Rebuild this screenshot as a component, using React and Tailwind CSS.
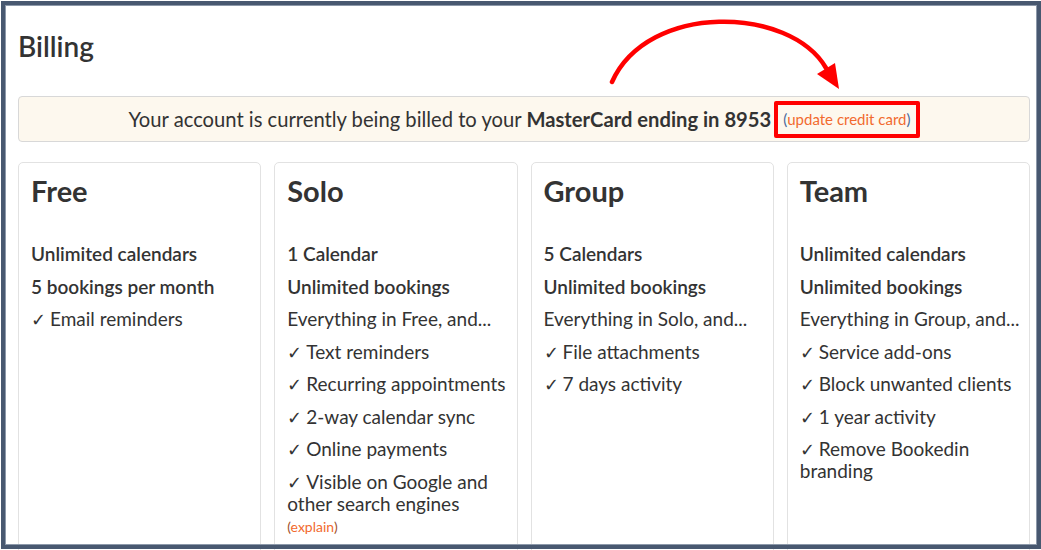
import React from "react";

const F = { fontFamily: "Lato, 'Open Sans', sans-serif" };

const plans = [
  {
    name: "Free",
    items: [
      { t: "Unlimited calendars", b: true },
      { t: "5 bookings per month", b: true },
      { t: "Email reminders", c: true },
    ],
  },
  {
    name: "Solo",
    items: [
      { t: "1 Calendar", b: true },
      { t: "Unlimited bookings", b: true },
      { t: "Everything in Free, and..." },
      { t: "Text reminders", c: true },
      { t: "Recurring appointments", c: true },
      { t: "2-way calendar sync", c: true },
      { t: "Online payments", c: true },
      { t: "Visible on Google and other search engines", c: true, explain: true },
    ],
  },
  {
    name: "Group",
    items: [
      { t: "5 Calendars", b: true },
      { t: "Unlimited bookings", b: true },
      { t: "Everything in Solo, and..." },
      { t: "File attachments", c: true },
      { t: "7 days activity", c: true },
    ],
  },
  {
    name: "Team",
    items: [
      { t: "Unlimited calendars", b: true },
      { t: "Unlimited bookings", b: true },
      { t: "Everything in Group, and..." },
      { t: "Service add-ons", c: true },
      { t: "Block unwanted clients", c: true },
      { t: "1 year activity", c: true },
      { t: "Remove Bookedin branding", c: true },
    ],
  },
];

export default function App() {
  return (
    <div className="relative w-[1041px] h-[550px] overflow-hidden bg-white text-[#333]" style={F}>
      <div className="pl-[18px] pr-[11px] pt-[30px]">
        <h1 className="text-[28px] leading-[32px] font-semibold text-[#333]">Billing</h1>
        <div className="mt-[34px] h-[46px] flex items-center justify-center rounded-[4px] border border-[#d8d8d8] bg-[#fdf8ee] text-[20.2px]">
          <span className="whitespace-nowrap">
            Your account is currently being billed to your{" "}
            <span className="font-bold">MasterCard ending in 8953</span>
          </span>
          <span className="ml-[3px] rounded-[2px] border-[4px] border-[#ff0000] px-[5px] h-[37px] flex items-center whitespace-nowrap text-[15px] text-[#f26a2e]">
            <span className="text-[#4a6a9a]">(</span>update credit card<span className="text-[#4a6a9a]">)</span>
          </span>
        </div>
        <div className="mt-[20px] grid grid-cols-4 gap-[13px]">
          {plans.map((p) => (
            <div key={p.name} className="h-[420px] rounded-[5px] border border-[#e2e2e2] pl-[12px] pr-[6px] pt-[14px]">
              <div className="text-[29px] leading-[28px] font-bold text-[#333]">{p.name}</div>
              <div className="mt-[38px] flex flex-col gap-[10.5px]">
                {p.items.map((it, i) => (
                  <div key={i} className={"text-[19px] leading-[22px] " + (it.b ? "font-semibold" : "font-normal")}>
                    {it.c && (
                      <span
                        className="mr-[4px] text-[18px] leading-[0]"
                        style={{ fontFamily: "'Noto Sans', sans-serif" }}
                      >
                        ✓
                      </span>
                    )}
                    {it.t}
                    {it.explain && (
                      <div className="mt-[3px] text-[14px] leading-[18px] text-[#f26a2e]">
                        <span className="text-[#a0522d]">(</span>explain<span className="text-[#a0522d]">)</span>
                      </div>
                    )}
                  </div>
                ))}
              </div>
            </div>
          ))}
        </div>
      </div>

      <svg className="absolute left-0 top-0 pointer-events-none" width="1041" height="550">
        <path d="M612 82 C 648 2, 790 6, 826 68" fill="none" stroke="#ff0000" strokeWidth="4.5" strokeLinecap="round" />
        <polygon points="839,89 817,74 835,63" fill="#ff0000" />
      </svg>

      <div className="absolute left-[1px] top-[1px] w-[1040px] h-[548px] border-[4px] border-[#485870] pointer-events-none">
        <div className="w-full h-full border border-[#8d99aa]" />
      </div>
    </div>
  );
}
